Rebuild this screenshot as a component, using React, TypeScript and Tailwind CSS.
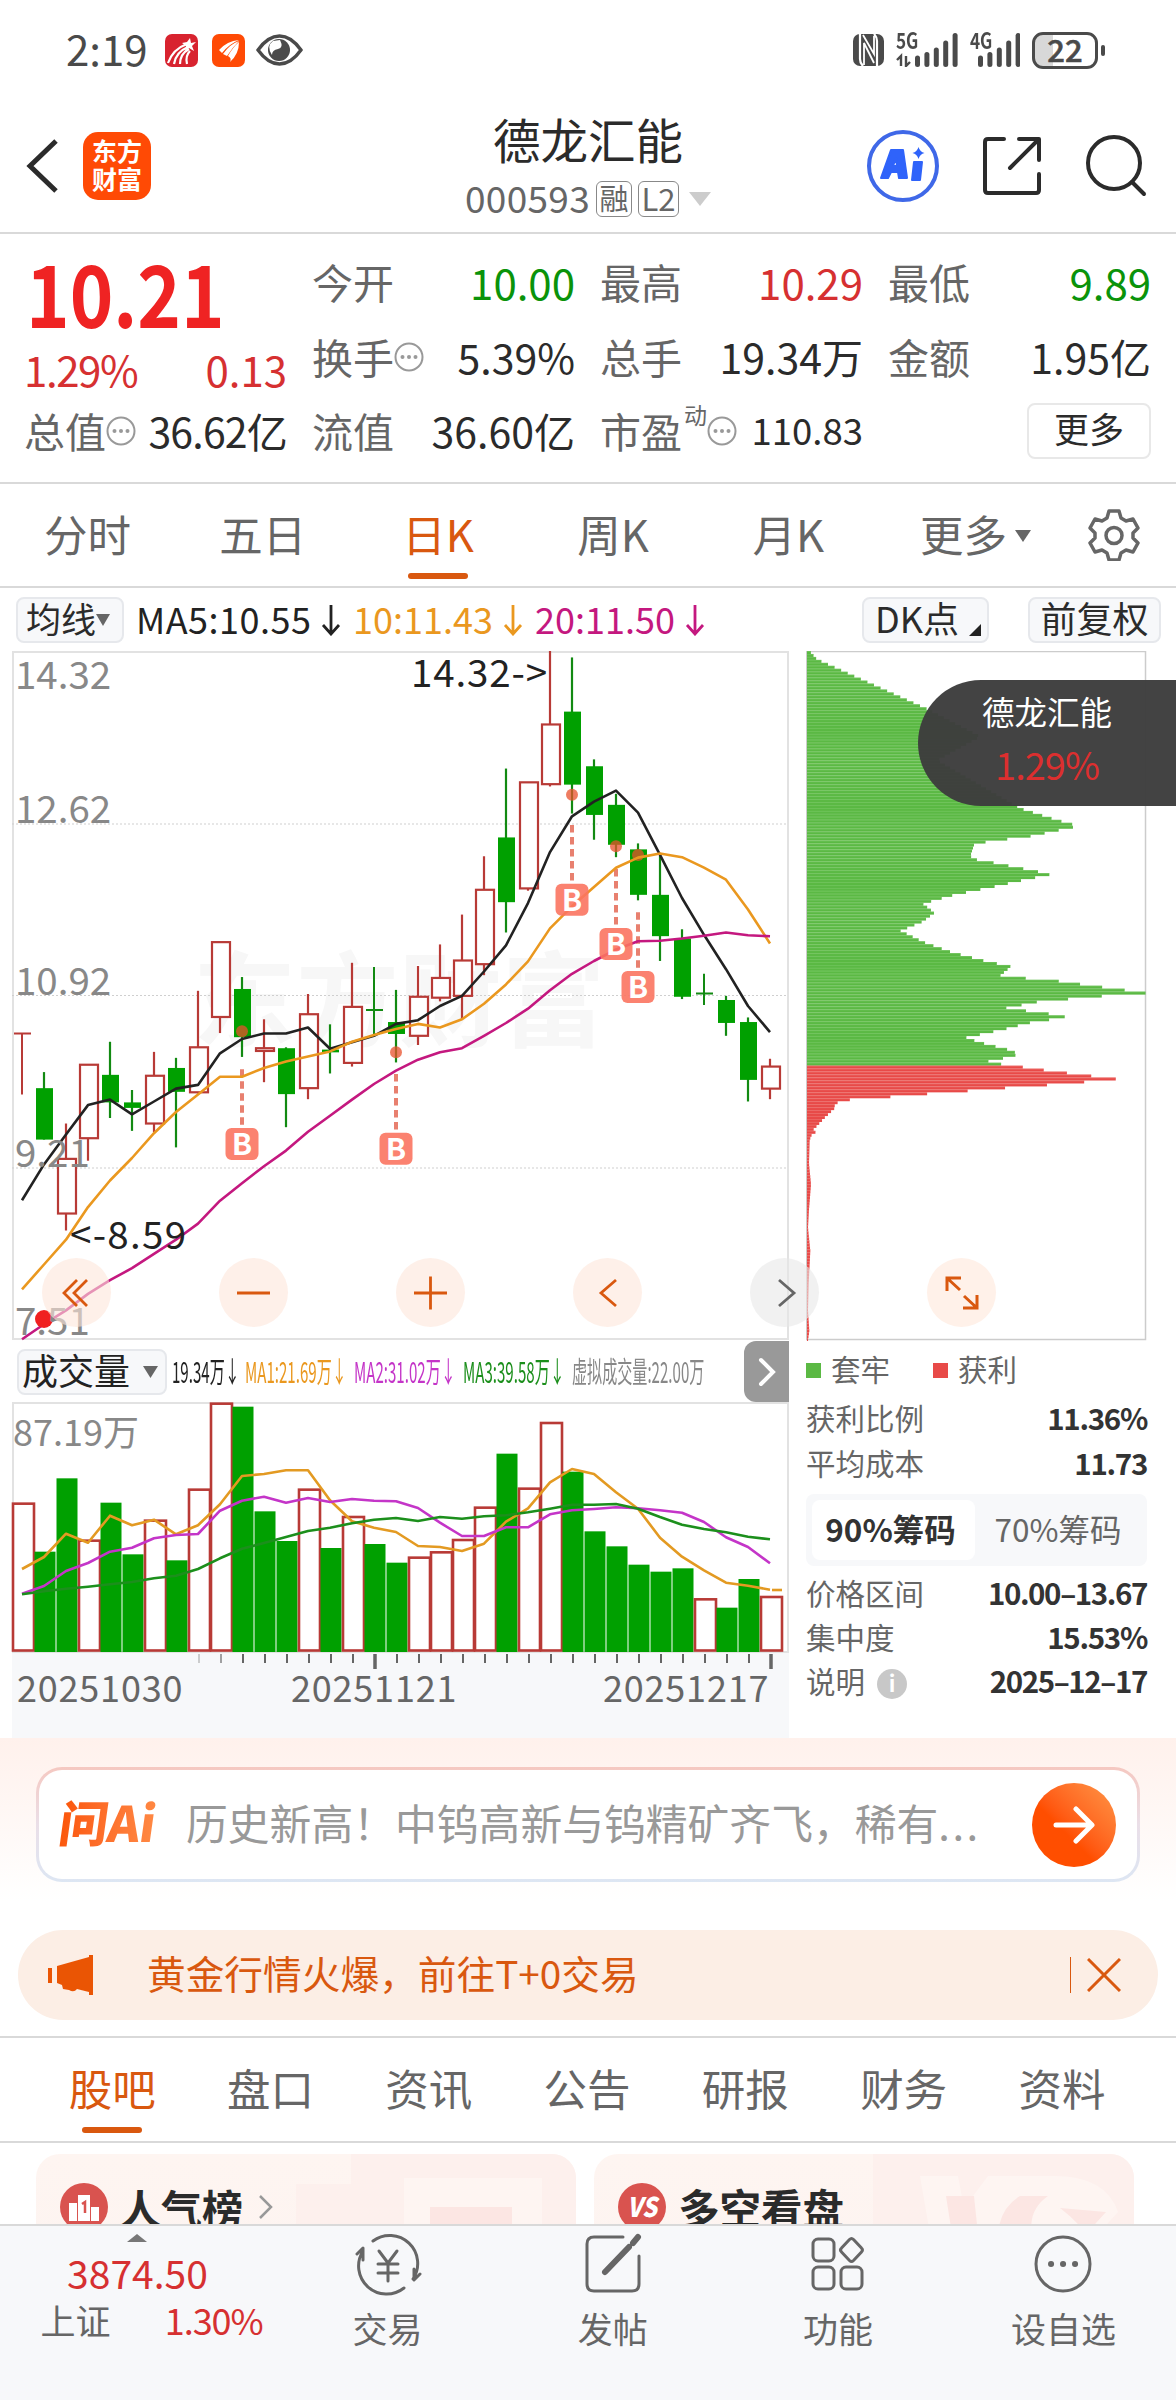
import React from "react";
import clsx from "clsx";

// one row per trading day: [up, high, body top, body bottom, low]
const candles: [number, number, number, number, number][] = [
  [1, 857, 857, 857, 990],
  [0, 941, 976, 1088, 1088],
  [1, 1053, 1130, 1249, 1286],
  [1, 925, 925, 1085, 1134],
  [0, 875, 947, 1007, 1041],
  [0, 980, 1007, 1019, 1069],
  [1, 897, 949, 1053, 1072],
  [0, 910, 932, 984, 1105],
  [1, 764, 887, 985, 988],
  [1, 658, 658, 821, 856],
  [0, 734, 760, 865, 908],
  [1, 826, 889, 895, 963],
  [0, 887, 889, 989, 1061],
  [1, 771, 815, 976, 1000],
  [0, 837, 892, 898, 944],
  [1, 703, 799, 921, 929],
  [0, 712, 806, 807, 858],
  [0, 762, 832, 858, 920],
  [1, 710, 777, 862, 882],
  [1, 663, 736, 779, 787],
  [1, 598, 698, 775, 827],
  [1, 471, 544, 706, 730],
  [0, 280, 430, 571, 637],
  [1, 310, 310, 541, 546],
  [1, 24, 184, 314, 319],
  [0, 38, 156, 315, 378],
  [0, 260, 275, 381, 435],
  [0, 335, 359, 446, 473],
  [0, 443, 456, 555, 567],
  [0, 470, 555, 645, 699],
  [0, 630, 650, 777, 782],
  [0, 727, 770, 771, 795],
  [0, 775, 784, 834, 862],
  [0, 822, 832, 958, 1005],
  [1, 912, 929, 977, 1000],
];

const ma5 = [1220, 1142, 1077, 1013, 1001, 1033, 1005, 977, 969, 900, 869, 857, 857, 844, 890, 876, 862, 836, 828, 797, 775, 722, 665, 573, 462, 384, 352, 328, 376, 468, 562, 642, 717, 797, 854];
const ma10 = [1414, 1360, 1306, 1235, 1177, 1128, 1074, 1028, 990, 951, 951, 932, 918, 907, 896, 875, 860, 847, 836, 844, 826, 792, 750, 700, 628, 580, 538, 496, 474, 465, 473, 496, 522, 587, 661];
const ma20 = [1523, 1490, 1460, 1424, 1394, 1368, 1337, 1306, 1271, 1221, 1183, 1146, 1112, 1071, 1036, 1001, 967, 938, 914, 898, 889, 862, 834, 803, 763, 727, 699, 674, 656, 655, 650, 644, 637, 643, 645];

const volumes = [520, 664, 444, 631, 517, 672, 571, 690, 478, 220, 229, 543, 632, 478, 653, 560, 641, 697, 682, 666, 629, 532, 370, 475, 278, 424, 603, 648, 703, 724, 714, 807, 832, 746, 800];
const volUp = [0, 3, 6, 8, 9, 13, 15, 18, 19, 20, 21, 23, 24, 31, 34];
const vma1 = [716, 680, 610, 637, 556, 585, 568, 612, 585, 522, 437, 431, 420, 420, 510, 573, 592, 605, 647, 650, 662, 640, 574, 534, 456, 416, 431, 486, 535, 622, 679, 720, 757, 766, 778];
const vma2 = [790, 767, 722, 698, 664, 652, 624, 614, 611, 541, 511, 499, 517, 503, 515, 506, 511, 513, 533, 577, 617, 617, 591, 591, 552, 540, 536, 531, 534, 540, 547, 575, 621, 650, 699];
const vma3 = [792, 783, 775, 769, 762, 755, 744, 736, 716, 684, 655, 638, 620, 602, 592, 579, 568, 563, 572, 560, 565, 558, 555, 546, 535, 523, 523, 521, 535, 560, 583, 596, 606, 619, 627];

// buy points: [day, dot, badge top]
const buys = [
  [10, 852, 1063],
  [17, 898, 1073],
  [25, 337, 531],
  [27, 449, 627],
  [28, 468, 721],
];

// chip distribution outline: [width, price level]
const chips = [
  [8, 24], [30, 42], [360, 150], [520, 210], [390, 262], [624, 360], [646, 368], [750, 392], [815, 405], [768, 412], [670, 427],
  [550, 438], [502, 444], [490, 470], [498, 477], [553, 484], [643, 497], [732, 510], [646, 523], [560, 537], [440, 555],
  [347, 574], [382, 594], [347, 613], [280, 633], [350, 658], [435, 680], [530, 698], [612, 711], [580, 730], [662, 737],
  [756, 743], [825, 750], [887, 756], [950, 762], [1018, 769], [867, 776], [778, 782], [690, 788], [598, 801], [662, 808],
  [726, 814], [778, 821], [662, 834], [594, 847], [475, 866], [534, 879], [604, 892], [638, 902], [586, 911], [538, 918],
  [594, 925], [658, 931], [725, 938], [792, 944], [860, 950], [940, 957], [816, 963], [698, 970], [577, 976], [458, 983],
  [342, 989], [225, 996], [108, 1002], [84, 1010], [82, 1020], [53, 1040], [18, 1067], [27, 1073], [12, 1079], [8, 1090],
  [6, 1140], [12, 1185], [6, 1240], [3, 1280], [10, 1330], [5, 1400], [3, 1460], [7, 1505], [3, 1524],
];

const RED = "#b83a36";
const GREEN = "#00a000";

const px = (i: number) => 10 + 22 * i;
const py = (v: number) => (v - 24) * 0.4592;
const vy = (v: number) => (v - 218) / 3;

const line = (data: number[], y: (v: number) => number) =>
  data.map((v, i) => `${px(i)},${y(v).toFixed(1)}`).join(" ");

function chipWidth(level: number) {
  for (let i = 1; i < chips.length; i++) {
    const [w1, l1] = chips[i - 1];
    const [w2, l2] = chips[i];
    if (level <= l2) return (w1 + ((w2 - w1) * (level - l1)) / (l2 - l1)) / 3;
  }
  return 1;
}

function StatusBar() {
  return (
    <div className="flex h-[100px] items-center justify-between pl-[66px] pr-[71px] text-[#4a4a4a]">
      <div className="flex items-center">
        <span className="w-[99px] text-[42px] leading-none pb-[5px]">2:19</span>
        <svg width="33" height="33" viewBox="0 0 33 33">
          <rect width="33" height="33" rx="7" fill="#d8232f" />
          <path d="M3 29Q8 15 22 10M9 30Q11 18 23 13M15 30Q15 20 24 15M22 30Q20 22 25 17" stroke="#fff" strokeWidth="2.2" fill="none" />
          <path d="m25 4 1 5 5-1-4 4 2 5-5-3-4 3 1-5-4-3 5-1z" fill="#fff" />
        </svg>
        <svg className="ml-3.5" width="33" height="33" viewBox="0 0 33 33">
          <rect width="33" height="33" rx="7" fill="#ff4a05" />
          <path d="M7 16Q15 7 27 6Q17 10 10 19zM11 20Q18 10 27 7Q20 14 15 22zM16 22Q21 13 27 8Q27 20 18 28Q20 24 16 22z" fill="#fff" />
        </svg>
        <svg className="ml-[11px]" width="47" height="32" viewBox="0 0 47 32">
          <path d="M2 16Q12 2 23.500 2T45 16Q35 30 23.500 30T2 16z" fill="none" stroke="#4a4a4a" strokeWidth="3.400" />
          <circle cx="23" cy="16" r="11" fill="#4a4a4a" />
          <path d="M24 6Q28 14 22 15T16 21Q10 12 17 7z" fill="#fff" />
        </svg>
      </div>
      <div className="flex items-center">
        <svg width="31" height="32" viewBox="0 0 31 32">
          <rect width="31" height="32" rx="7" fill="#4a4a4a" />
          <path d="M7 0v25q0 4 3 7M24 32V7q0-4-3-7" fill="none" stroke="#fff" strokeWidth="2.200" />
          <path d="M11 31V9l10 20M10 1l11 19V2" fill="none" stroke="#fff" strokeWidth="1.800" />
        </svg>
        {["5G", "4G"].map((g, n) => (
          <div key={g} className={clsx("relative ml-3 h-[34px]", n ? "w-[50px]" : "w-[62px]")}>
            <span className="absolute -top-[5px] left-0 origin-left scale-x-[0.78] text-[22px] font-bold leading-none">{g}</span>
            <svg className="absolute inset-0" width={n ? 50 : 62} height="34" viewBox={n ? "11 0 50 34" : "0 0 62 34"}>
              {!n && <path d="M5 33V23l-4 4M10 23v10l4-4" fill="none" stroke="#4a4a4a" strokeWidth="2.400" />}
              {[25, 21.5, 17, 10, 2.5].map((y, i) => (
                <path key={y} d={`M${21.500 + i * 9.400} ${y}V31.500`} stroke="#4a4a4a" strokeWidth="5" strokeLinecap="round" />
              ))}
            </svg>
          </div>
        ))}
        <div className="ml-3 flex h-[37px] w-[66px] items-center justify-center rounded-[11px] border-[3px] border-[#4a4a4a] bg-linear-to-r from-[#d8d8d8] from-[30%] to-white to-[30%] pb-1 text-[31px] font-medium leading-none [-webkit-text-stroke:0.6px_#4a4a4a]">
          22
        </div>
        <div className="ml-[3px] h-[11px] w-[4px] rounded bg-[#4a4a4a]" />
      </div>
    </div>
  );
}

function Header() {
  return (
    <div className="relative flex h-[134px] items-center justify-between border-b-2 border-[#d9d9d9] pl-[26px] pr-[29px]">
      <div className="flex items-center">
        <svg width="34" height="58" viewBox="0 0 34 58">
          <path d="M30 4 4 29l26 25" fill="none" stroke="#2b2b2b" strokeWidth="5" />
        </svg>
        <div className="ml-[23px] flex size-[68px] flex-col items-center justify-center rounded-[15px] bg-[#ff4a05] pb-1 text-[25px] font-bold leading-[28px] text-white">
          <span>东方</span>
          <span>财富</span>
        </div>
      </div>
      <div className="absolute inset-x-0 top-3 flex flex-col items-center">
        <h1 className="text-[47.500px] leading-[54px] text-[#2b2b2b]">德龙汇能</h1>
        <div className="mt-[15px] flex h-9 items-center text-[#666]">
          <span className="pb-[4px] text-[37px] leading-9 tracking-[0.3px]">000593</span>
          <span className="ml-1.5 flex h-9 w-9 items-center justify-center rounded-md border-[1.5px] border-[#888] pb-1 text-[29px] leading-none">融</span>
          <span className="ml-1.5 flex h-9 w-[41px] items-center justify-center rounded-md border-[1.5px] border-[#888] pb-1 text-[31px] leading-none">L2</span>
          <svg className="ml-2.5" width="22" height="14" viewBox="0 0 22 14">
            <path d="M0 0h22L11 14z" fill="#ccc" />
          </svg>
        </div>
      </div>
      <div className="flex items-center">
        <svg width="74" height="74" viewBox="0 0 74 74">
          <circle cx="37" cy="37" r="34" fill="none" stroke="#3f68e8" strokeWidth="4" />
          <path d="M25 21h12l4 28h-8l-1-6h-7l-3 6h-7zM30 29l-3 8h4z" fill="#2f63fa" stroke="#2f63fa" strokeWidth="2" strokeLinejoin="round" />
          <path d="M48 33h8l-2 18h-8z" fill="#2f63fa" stroke="#2f63fa" strokeWidth="2" strokeLinejoin="round" />
          <path d="M52.500 18q1.500 5 6 6-4.500 1-6 6-1.500-5-6-6 4.500-1 6-6z" fill="#2f63fa" />
        </svg>
        <svg className="ml-[42px]" width="60" height="60" viewBox="0 0 60 60" fill="none" stroke="#2b2b2b" strokeWidth="4" strokeLinecap="round" strokeLinejoin="round">
          <path d="M22 3H6Q3 3 3 6v48q0 3 3 3h48q3 0 3-3V38M37 3h20v21M56 4 28 32" />
        </svg>
        <svg className="ml-[43px]" width="62" height="62" viewBox="0 0 62 62" fill="none" stroke="#2b2b2b" strokeWidth="4" strokeLinecap="round">
          <circle cx="29" cy="28" r="26" />
          <path d="m47 47 12 12" />
        </svg>
      </div>
    </div>
  );
}

function Dots({ className }: { className?: string }) {
  return (
    <svg className={className} width="30" height="30" viewBox="0 0 30 30">
      <circle cx="15" cy="15" r="13.500" fill="none" stroke="#999" strokeWidth="2" />
      <circle cx="8.500" cy="15" r="2" fill="#999" />
      <circle cx="15" cy="15" r="2" fill="#999" />
      <circle cx="21.500" cy="15" r="2" fill="#999" />
    </svg>
  );
}

function Stat({ label, value, color = "text-[#2b2b2b]", dots }: { label: string; value: string; color?: string; dots?: boolean }) {
  return (
    <div className="flex w-[263px] items-center justify-between">
      <span className="flex items-center text-[#666]">
        {label}
        {dots && <Dots />}
      </span>
      <span className={color}>{value}</span>
    </div>
  );
}

function Quote() {
  return (
    <div className="flex h-[250px] flex-col border-b-2 border-[#d9d9d9] pl-[24px] pr-[25px] pt-[10px] text-[41px] leading-none">
      <div className="flex">
        <div className="w-[289px]">
          <div className="h-[96px] pt-[3px] pl-[2px]">
            <span className="inline-block origin-left scale-x-[0.86] text-[86px] font-bold leading-[88px] text-[#ef2323]">10.21</span>
          </div>
          <div className="flex w-[263px] justify-between pt-[8px] text-[42px] text-[#d63031]">
            <span className="tracking-[-1.400px]">1.29%</span>
            <span>0.13</span>
          </div>
        </div>
        <div className="flex flex-col">
          <div className="flex h-[75px] items-center gap-[25px]">
            <Stat label="今开" value="10.00" color="text-[42px] text-[#0a930a]" />
            <Stat label="最高" value="10.29" color="text-[42px] text-[#d63031]" />
            <Stat label="最低" value="9.89" color="text-[42px] text-[#0a930a]" />
          </div>
          <div className="flex h-[75px] items-center gap-[25px]">
            <Stat label="换手" value="5.39%" dots />
            <Stat label="总手" value="19.34万" />
            <Stat label="金额" value="1.95亿" />
          </div>
        </div>
      </div>
      <div className="-mt-px flex h-[75px] items-center gap-[25px]">
        <div className="flex w-[263px] items-center justify-between text-[#666]">
          <span className="flex items-center">
            总值
            <Dots />
          </span>
          <span className="tracking-[-0.8px] text-[#2b2b2b]">36.62亿</span>
        </div>
        <Stat label="流值" value="36.60亿" />
        <div className="flex w-[263px] items-center justify-between text-[#666]">
          <span className="flex items-center">
            市盈
            <span className="mb-8 ml-0.5 text-[23px]">动</span>
            <Dots />
          </span>
          <span className="text-[36.500px] text-[#2b2b2b]">110.83</span>
        </div>
        <div className="flex flex-1 justify-end">
          <button className="h-[56px] w-[124px] rounded-lg border-2 border-[#e8e8e8] pb-1.5 text-[35px] leading-none text-[#2b2b2b]">更多</button>
        </div>
      </div>
    </div>
  );
}

function PeriodTabs() {
  const tabs = ["分时", "五日", "日K", "周K", "月K"];
  return (
    <div className="flex h-[104px] items-center border-b-2 border-[#d9d9d9] text-[43.500px] leading-none text-[#666]">
      {tabs.map((t) => (
        <div key={t} className={clsx("relative flex h-full w-[175.200px] items-center justify-center pb-[3px]", t === "日K" && "text-[#d9580f]")}>
          {t}
          {t === "日K" && <span className="absolute bottom-[7px] h-1.5 w-[60px] rounded-full bg-[#d9580f]" />}
        </div>
      ))}
      <div className="ml-[44px] flex items-center pb-[3px]">
        更多
        <svg className="ml-2 mt-1" width="16" height="12" viewBox="0 0 16 12">
          <path d="M0 0h16L8 12z" fill="#666" />
        </svg>
      </div>
      <svg className="ml-[57px]" width="52" height="52" viewBox="0 0 52 52" fill="none" stroke="#666" strokeWidth="3.500" strokeLinejoin="round">
        <path d="M21 2h10l2 7 5 3 7-2 5 9-5 5v5l5 5-5 9-7-2-5 3-2 7H21l-2-7-5-3-7 2-5-9 5-5v-5l-5-5 5-9 7 2 5-3z" />
        <circle cx="26" cy="26.500" r="8" />
      </svg>
    </div>
  );
}

function DownArrow({ className }: { className?: string }) {
  return (
    <svg className={className} width="20" height="32" viewBox="0 0 20 32" fill="none" stroke="currentColor" strokeWidth="2.800">
      <path d="M10 1v29M2 21l8 9 8-9" />
    </svg>
  );
}

function MaBar() {
  const chip = "flex h-[46px] items-center rounded-lg border-2 border-[#e6e8ec] bg-[#f7f8fa] text-[#2b2b2b]";
  return (
    <div className="flex h-[63px] items-center pl-4 text-[36px] leading-none">
      <div className={clsx(chip, "w-[108px] pl-2")}>
        <span className="pb-[5px] text-[35px]">均线</span>
        <svg width="14" height="12" viewBox="0 0 14 12">
          <path d="M0 0h14L7 12z" fill="#666" />
        </svg>
      </div>
      <div className="flex w-[738px] items-center pb-1 pl-[12px]">
        <span className="w-[185px] whitespace-nowrap tracking-[0.500px] text-[#222]">MA5:10.55</span>
        <DownArrow className="mt-1 text-[#222]" />
        <span className="ml-3 w-[150px] text-[#ea981f]">10:11.43</span>
        <DownArrow className="mt-1 text-[#ea981f]" />
        <span className="ml-3 w-[150px] text-[#c4187f]">20:11.50</span>
        <DownArrow className="mt-1 text-[#c4187f]" />
      </div>
      <div className={clsx(chip, "w-[127px] pl-[11px]")}>
        <span className="pb-[5px]">DK点</span>
        <svg className="ml-2.5 mt-5" width="12" height="12" viewBox="0 0 12 12">
          <path d="M12 0v12H0z" fill="#222" />
        </svg>
      </div>
      <div className={clsx(chip, "ml-[39px] w-[133px] justify-center")}>
        <span className="pb-[5px]">前复权</span>
      </div>
    </div>
  );
}

function CandleChart() {
  return (
    <svg className="block overflow-visible" width="777" height="689" viewBox="0 0 777 689">
      <rect x="1" y="1" width="775" height="687" fill="#fff" stroke="#e2e2e2" strokeWidth="2" />
      <text x="181" y="388" textLength="412" fill="#f7f7f7" fontWeight="700" fontSize="103">东方财富</text>
      {[173, 344.500, 517].map((y) => (
        <path key={y} d={`M0 ${y}H776`} stroke="#cfcfcf" strokeWidth="1" strokeDasharray="2 2" />
      ))}
      {candles.map(([up, h, t, b, l], i) => {
        const x = px(i);
        const c = up ? RED : "#128a12";
        if (b - t < 2)
          return (
            <path key={i} d={`M${x} ${py(h)}V${py(l)}M${x - 8} ${py(t)}h17`} stroke={c} strokeWidth="2" />
          );
        return (
          <g key={i}>
            <path d={`M${x} ${py(h)}V${py(l)}`} stroke={c} strokeWidth="2.200" />
            {up ? (
              <rect x={x - 8} y={py(t)} width="18" height={py(b) - py(t)} fill="#fff" stroke={RED} strokeWidth="2.200" />
            ) : (
              <rect x={x - 8} y={py(t)} width="17" height={py(b) - py(t)} fill={GREEN} />
            )}
          </g>
        );
      })}
      {buys.map(([day, dot, top]) => (
        <g key={day}>
          <path d={`M${px(day)} ${py(top - 128)}V${py(top - 7)}`} stroke="#e8806f" strokeWidth="4" strokeDasharray="7.500 4.500" />
          <circle cx={px(day)} cy={py(dot)} r="6" fill="#e8502c" fillOpacity="0.750" />
        </g>
      ))}
      <g fill="none" strokeWidth="2.600" strokeLinejoin="round">
        <polyline points={line(ma5, py)} stroke="#222" />
        <polyline points={line(ma10, py)} stroke="#ea981f" />
        <polyline points={line(ma20, py)} stroke="#c4187f" />
      </g>
      {buys.map(([day, , top]) => (
        <g key={day}>
          <rect x={px(day) - 16.500} y={py(top)} width="33" height="32" rx="6" fill="#fb7460" fillOpacity="0.900" />
          <text x={px(day)} y={py(top) + 27} textAnchor="middle" fontSize="30" fontWeight="700" fill="#fff">B</text>
        </g>
      ))}
      <circle cx="32" cy="668" r="9" fill="#f02020" />
      <g fontSize="38.500" fill="#888">
        <text x="3" y="38">14.32</text>
        <text x="3" y="172">12.62</text>
        <text x="3" y="344">10.92</text>
        <text x="3" y="516">9.21</text>
        <text x="3" y="684">7.51</text>
      </g>
      <g fontSize="38.500" fill="#222">
        <text x="399" y="36" textLength="136">14.32-&gt;</text>
        <text x="58" y="598" textLength="116">&lt;-8.59</text>
      </g>
    </svg>
  );
}

function VolumeChart() {
  return (
    <svg className="block overflow-visible" width="777" height="265" viewBox="0 0 777 265">
      <rect x="1" y="0" width="775" height="249" fill="#fff" stroke="#e2e2e2" strokeWidth="2" />
      {volumes.map((v, i) => {
        const x = 22 * i;
        return volUp.includes(i) ? (
          <rect key={i} x={x + 1} y={vy(v)} width="21" height={247.500 - vy(v)} fill="#fff" stroke={RED} strokeWidth="2.600" />
        ) : (
          <rect key={i} x={x + 0.500} y={vy(v)} width="21" height={249 - vy(v)} fill={GREEN} />
        );
      })}
      <g fill="none" strokeWidth="2.600" strokeLinejoin="round">
        <polyline points={line(vma1, vy)} stroke="#e39a22" />
        <polyline points={line(vma2, vy)} stroke="#c435c8" />
        <polyline points={line(vma3, vy)} stroke="#1c8f1c" />
        <path d="M760 187h10" stroke="#e39a22" />
      </g>
      <text x="1" y="43" fontSize="36" fill="#888">87.19万</text>
      {volumes.map((_, i) =>
        i < 8 ? null : (
          <path
            key={i}
            d={`M${px(i) + 1} 251v${i === 16 || i === 34 ? 15 : 9}`}
            stroke="#666"
            strokeOpacity={i === 8 ? 0.3 : i === 9 ? 0.6 : 1}
            strokeWidth={i === 16 || i === 34 ? 3.5 : 2}
          />
        )
      )}
    </svg>
  );
}

function ChipChart() {
  const rows = Array.from({ length: 233 }, (_, i) => i);
  return (
    <svg className="block" width="341" height="690" viewBox="0 0 341 690">
      <rect x="0.500" y="0.500" width="339" height="688" fill="#fff" stroke="#ccc" strokeWidth="1.500" />
      {rows.map((i) => {
        const level = 27 + i * 6.45;
        const w = Math.max(1, chipWidth(level));
        const up = level > 928;
        return (
          <g key={i}>
            <rect x="1" y={(level - 27) * 0.4592} width={w} height="3" fill={up ? "#e84a48" : "#5bb944"} />
            <path d={`M1 ${(level - 27) * 0.4592 + 0.5}h${w}`} stroke={up ? "#f08a86" : "#86cf74"} strokeWidth="0.400" />
          </g>
        );
      })}
    </svg>
  );
}

const volLabels = [
  { t: "19.34万↓", c: "text-[#222]", w: "w-[73px]" },
  { t: "MA1:21.69万↓", c: "text-[#ea981f]", w: "w-[109px]" },
  { t: "MA2:31.02万↓", c: "text-[#c435c8]", w: "w-[109px]" },
  { t: "MA3:39.58万↓", c: "text-[#1c8f1c]", w: "w-[109px]" },
  { t: "虚拟成交量:22.00万", c: "text-[#888]", w: "w-[170px]" },
];

const toolIcons = ["M16 2 3 15l13 13M26 2 13 15l13 13", "M-1 15h33", "M-1 15h33M15.500-1.500v33", "M24 2 9 15l15 13", "M10 2l15 13-15 13"];

function Charts() {
  return (
    <div className="relative flex h-[1087px]">
      <div className="ml-3 w-[777px]">
        <CandleChart />
        <div className="flex h-[63px] items-center pl-[5px]">
          <div className="flex h-[46px] w-[150px] items-center rounded-lg border-2 border-[#e6e8ec] bg-[#f7f8fa] pl-[3px] text-[36px] leading-none text-[#222]">
            <span className="pb-[5px]">成交量</span>
            <svg className="ml-[13px]" width="15" height="12" viewBox="0 0 15 12">
              <path d="M0 0h15L7.500 12z" fill="#666" />
            </svg>
          </div>
          <div className="flex flex-1 pl-[5px] text-[29px] leading-none">
            {volLabels.map((l) => (
              <span key={l.t} className={clsx("block h-8", l.w, l.c)}>
                <span className="inline-block origin-left scale-x-[0.52] whitespace-nowrap">{l.t}</span>
              </span>
            ))}
          </div>
          <div className="flex h-[61px] w-[45px] items-center justify-center rounded-l-[12px] bg-[#999]">
            <svg width="18" height="30" viewBox="0 0 18 30">
              <path d="m3 3 12 12L3 27" fill="none" stroke="#fff" strokeWidth="4" strokeLinecap="round" />
            </svg>
          </div>
        </div>
        <div className="h-[335px] bg-[#f7f8fa]">
          <VolumeChart />
          <div className="flex pl-[5px] text-[36px] leading-[36px] tracking-[0.800px] text-[#666]">
            <span className="w-[274px]">20251030</span>
            <span className="w-[312px]">20251121</span>
            <span>20251217</span>
          </div>
        </div>
      </div>

      <div className="ml-[17px] w-[341px] text-[29.500px] leading-none text-[#666]">
        <ChipChart />
        <div className="flex h-[57px] items-center pt-0.5">
          <span className="size-[15px] bg-[#5bb944]" />
          <span className="ml-2.5 w-[102px] pb-1">套牢</span>
          <span className="size-[15px] bg-[#e84a48]" />
          <span className="ml-2.5 pb-1">获利</span>
        </div>
        <ChipRow label="获利比例" value="11.36%" />
        <ChipRow label="平均成本" value="11.73" />
        <div className="mb-[6px] mt-2 flex h-[72px] rounded-lg bg-[#f7f8fa] p-1.5 text-[31.500px]">
          <div className="flex w-[163px] items-center justify-center rounded-lg bg-white pb-1 pr-1.5 font-bold text-[#333]">90%筹码</div>
          <div className="flex flex-1 items-center justify-center pb-1">70%筹码</div>
        </div>
        <ChipRow label="价格区间" value="10.00–13.67" />
        <ChipRow label="集中度" value="15.53%" />
        <ChipRow label="说明" value="2025–12–17" info />
      </div>

      {/* chart tools */}
      <div className="absolute left-[42px] top-[607px] flex gap-[108px]">
        {toolIcons.map((d, i) => (
          <div key={d} className={clsx("flex size-[69px] items-center justify-center rounded-full", i === 4 ? "bg-[#e8e8e8]/60" : "bg-[#fde6da]/60")}>
            <svg className="overflow-visible" width="31" height="30" viewBox="0 0 31 30">
              <path d={d} fill="none" stroke={i === 4 ? "#666" : "#d9580f"} strokeWidth="2.800" />
            </svg>
          </div>
        ))}
        <div className="flex size-[69px] items-center justify-center rounded-full bg-[#fff1e9]">
          <svg width="34" height="34" viewBox="0 0 34 34" fill="none" stroke="#d9580f" strokeWidth="3">
            <path d="M2 15V2h14M2 2l13 12M32 19v13H18M32 32 19 20" />
          </svg>
        </div>
      </div>

      {/* floating ticker */}
      <div className="absolute right-0 top-[29px] flex h-[126px] w-[258px] flex-col items-center rounded-l-full bg-[#3d3d3d]/97 pt-[15px] leading-none">
        <span className="text-[32.500px] text-white">德龙汇能</span>
        <span className="mt-[17px] text-[38px] tracking-[-1px] text-[#dc2f2f]">1.29%</span>
      </div>
    </div>
  );
}

function ChipRow({ label, value, info }: { label: string; value: string; info?: boolean }) {
  return (
    <div className="flex h-[44.200px] items-center justify-between pb-1">
      <span className="flex items-center">
        {label}
        {info && <span className="ml-3 mt-1.5 flex size-[30px] items-center justify-center rounded-full bg-[#c8c8c8] pb-[3px] text-[22px] font-bold text-white">i</span>}
      </span>
      <span className={clsx("font-bold text-[#333]", value.length > 6 ? "tracking-[-1.400px]" : "tracking-[-1.300px]")}>{value}</span>
    </div>
  );
}

function AskAi() {
  return (
    <div className="h-[192px] bg-linear-to-b from-[#fff1ec] to-white to-[85%] px-[36px] pt-[29px]">
      <div className="h-[115px] rounded-[26px] bg-linear-to-b from-[#f5c8c1] via-[#eadfe8] to-[#dde6f3] p-[3px]">
        <div className="flex h-full items-center rounded-[23px] bg-white pl-[21px] pr-[21px]">
          <div className="w-[126px] pb-2">
            <span className="inline-block -skew-x-8 bg-linear-to-r from-[#fb5607] to-[#ff8a45] bg-clip-text pr-1 text-[49px] leading-[60px] font-black tracking-[-0.500px] text-transparent">
              问Ai
            </span>
          </div>
          <span className="flex-1 whitespace-nowrap pb-1 text-[41.800px] leading-none text-[#999]">
            历史新高！中钨高新与钨精矿齐飞，稀有<span className="tracking-[2.500px]">...</span>
          </span>
          <span className="flex size-[84px] items-center justify-center rounded-full bg-linear-to-bl from-[#ff9545] to-[#ff4e00] to-[60%]">
            <svg width="42" height="38" viewBox="0 0 42 38" fill="none" stroke="#fff" strokeWidth="5" strokeLinecap="round" strokeLinejoin="round">
              <path d="M3 19h35M23 3l16 16-16 16" />
            </svg>
          </span>
        </div>
      </div>
    </div>
  );
}

function Notice() {
  return (
    <div className="mx-[18px] flex h-[90px] items-center rounded-full bg-[#fceee5] pl-[29px] pr-[37px] text-[#d9580f]">
      <svg width="48" height="40" viewBox="0 0 48 40" fill="#ea5504">
        <path d="M1 13h4v15H1zM10 11 42 2V0h4v40h-4v-3l-12-3q-3 4-8 1l-6-1-1-4-5-2z" />
      </svg>
      <span className="ml-[52px] pb-1.5 text-[38.700px] leading-none">黄金行情火爆，前往T+0交易</span>
      <span className="ml-auto h-9 w-px bg-[#d9580f]" />
      <svg className="ml-4" width="34" height="34" viewBox="0 0 34 34" fill="none" stroke="#d9580f" strokeWidth="3">
        <path d="m1 1 32 32M33 1 1 33" />
      </svg>
    </div>
  );
}

function InfoTabs() {
  return (
    <div className="mt-4 flex h-[107px] items-center border-y-2 border-[#d9d9d9] pl-[33px] text-[43.500px] leading-none text-[#666]">
      {["股吧", "盘口", "资讯", "公告", "研报", "财务", "资料"].map((t, i) => (
        <div key={t} className={clsx("relative flex h-full w-[158.300px] items-center justify-center pb-1", i === 0 && "text-[#d9580f]")}>
          {t}
          {i === 0 && <span className="absolute bottom-[8px] h-1.5 w-[60px] rounded-full bg-[#d9580f]" />}
        </div>
      ))}
    </div>
  );
}

function Cards() {
  const card = "relative flex h-[120px] w-[540px] overflow-hidden rounded-t-[24px] bg-linear-to-b from-[#fef5f1] to-[#fdf4f1] pl-6 pt-[29px]";
  return (
    <div className="flex h-[81px] gap-[18px] overflow-hidden pl-9 pt-[11px]">
      <div className={card}>
        <svg className="absolute right-0 top-0" width="280" height="80" viewBox="0 0 280 80">
          <path d="M55 0h225v80H0V30h55z" fill="#fdf0ed" />
          <path d="M108 24h138v56H108z" fill="#fef5f2" />
          <path d="M134 53h82v27h-82z" fill="#fce6e3" />
        </svg>
        <svg className="relative" width="48" height="48" viewBox="0 0 48 48">
          <circle cx="24" cy="24" r="24" fill="#d9534f" />
          <path d="M9 20h8v18H9zM18 12h12v26H18zM31 24h8v14h-8z" fill="#fff" />
          <path d="M22 21l3-2v11" stroke="#d9534f" strokeWidth="2.500" fill="none" />
        </svg>
        <span className="relative ml-3 text-[41px] font-bold leading-[48px] text-[#2b2b2b]">人气榜</span>
        <svg className="relative ml-3.5 mt-3" width="18" height="24" viewBox="0 0 18 24">
          <path d="m3 1 11 11L3 23" fill="none" stroke="#999" strokeWidth="2.500" />
        </svg>
      </div>
      <div className={card}>
        <svg className="absolute right-0 top-0" width="264" height="80" viewBox="0 0 264 80">
          <path d="M3 0h261v80H3z" fill="#fdf0ed" />
          <path d="M50 22h38l6 32 24-32h66q52 0 64 36l-20 22H60z" fill="#fef5f2" />
          <path d="M76 42h28l4 38H82zM150 42h28q-20 14-16 38h-34q2-26 22-38zM190 54l46 4-20 22q-10-14-26-26z" fill="#fce6e3" />
        </svg>
        <svg className="relative" width="48" height="48" viewBox="0 0 48 48">
          <circle cx="24" cy="24" r="24" fill="#d9534f" />
          <text x="24" y="34" textAnchor="middle" fontSize="27" fontWeight="900" fontStyle="italic" fill="#fff" textLength="30" lengthAdjust="spacingAndGlyphs">VS</text>
        </svg>
        <span className="relative ml-3 text-[41.500px] font-bold leading-[48px] text-[#2b2b2b]">多空看盘</span>
      </div>
    </div>
  );
}

const navItems = [
  {
    label: "交易",
    icon: (
      <>
        <path d="M15 7a28 28 0 0 1 40 38M46 54A28 28 0 0 1 5 17M-1 20l6-6v12M62 40l-6 6v-11" />
        <path d="M21 17l9 12 9-12M20 30h20M20 39h20M30 29v18" />
      </>
    ),
  },
  {
    label: "发帖",
    icon: (
      <>
        <path d="M40 3H11q-7 0-7 7v40q0 7 7 7h38q7 0 7-7V22" />
        <path d="M22 38 46 13M50 9l5-6" strokeWidth="6" />
      </>
    ),
  },
  {
    label: "功能",
    icon: (
      <>
        <rect x="5" y="5" width="21" height="22" rx="5" />
        <rect x="5" y="33" width="21" height="22" rx="5" />
        <rect x="33" y="33" width="21" height="22" rx="5" />
        <path d="M41.500 5.500q2-2 4 0l8 8.500q2 2 0 4l-8 8.500q-2 2-4 0l-8-8.500q-2-2 0-4z" />
      </>
    ),
  },
  {
    label: "设自选",
    icon: (
      <>
        <circle cx="30" cy="30" r="27" />
        <path d="M18 30h.1M30 30h.1M42 30h.1" strokeWidth="6" />
      </>
    ),
  },
];

function BottomNav() {
  return (
    <div className="flex h-[177px] border-t-2 border-[#d9d9d9] bg-[#f7f8fa] leading-none">
      <div className="flex w-[275px] flex-col items-center">
        <svg className="mt-[8px]" width="20" height="8" viewBox="0 0 20 8">
          <path d="M10 0 20 8H0z" fill="#777" />
        </svg>
        <span className="mt-[11px] text-[39px] text-[#d63031]">3874.50</span>
        <div className="mt-[9px] flex w-[222px] items-center justify-between pl-[14px]">
          <span className="text-[35px] text-[#666]">上证</span>
          <span className="mr-[-14px] text-[36px] tracking-[-1.100px] text-[#d63031]">1.30%</span>
        </div>
      </div>
      {navItems.map((n) => (
        <div key={n.label} className="flex w-[225.300px] flex-col items-center text-[35px] text-[#666]">
          <svg className="mt-[8px] overflow-visible" width="60" height="60" viewBox="0 0 60 60" fill="none" stroke="#666" strokeWidth="3" strokeLinecap="round" strokeLinejoin="round">
            {n.icon}
          </svg>
          <span className="mt-[16px]">{n.label}</span>
        </div>
      ))}
    </div>
  );
}

function App() {
  return (
    <div className="h-[2400px] w-[1176px] overflow-hidden bg-white font-['Noto_Sans_CJK_SC',sans-serif]">
      <StatusBar />
      <Header />
      <Quote />
      <PeriodTabs />
      <MaBar />
      <Charts />
      <AskAi />
      <Notice />
      <InfoTabs />
      <Cards />
      <BottomNav />
    </div>
  );
}

export default App;
